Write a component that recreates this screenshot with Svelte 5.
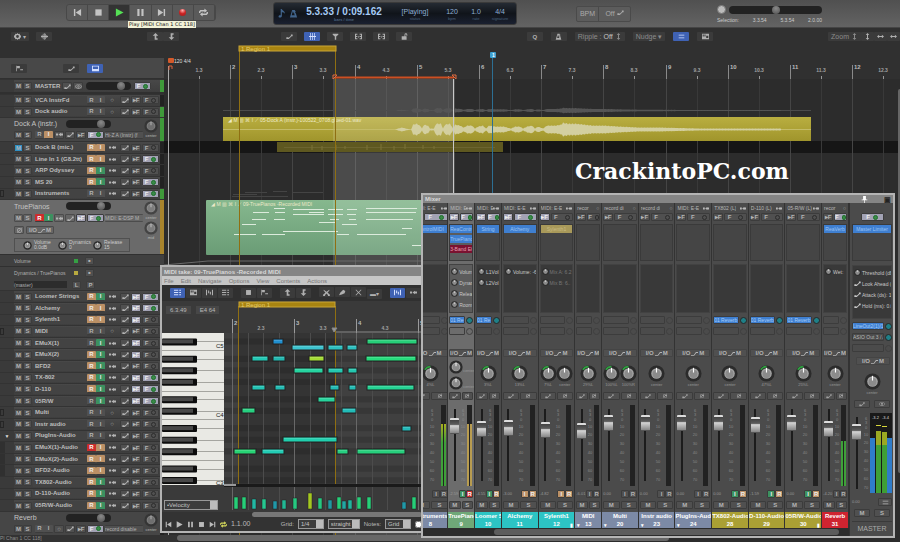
<script>
    // Track list, R/I colours: t = tan, g = green, r = red, - = off
    const topTracks = [
        { name: "VCA InstrFd", r: "-", i: "-" },
        { name: "Dock audio", r: "-", i: "-", meter: "green" }
    ];
    const inputTracks = [
        { name: "Dock B (mic.)", r: "t", i: "t", io: true, muted: true },
        { name: "Line In 1 (G8.2tt)", r: "t", i: "t", io: true, fx: true },
        { name: "ARP Odyssey", r: "t", i: "g", io: true },
        { name: "MS 20", r: "t", i: "g", io: true, fx: true },
        { name: "Instruments", r: "-", i: "-", io: true, fx: true, meter: "green", folder: true }
    ];
    const tracks = [
        { name: "Loomer Strings", r: "t", i: "g", io: true, pre: true, fx: true },
        { name: "Alchemy", r: "t", i: "t", io: true, pre: true, fx: true },
        { name: "Sylenth1", r: "t", i: "t", io: true, pre: true },
        { name: "MIDI", r: "-", i: "-", folder: true },
        { name: "EMuX(1)", r: "-", i: "g", io: true, pre: true },
        { name: "EMuX(2)", r: "t", i: "g", io: true, pre: true },
        { name: "BFD2", r: "t", i: "g", io: true },
        { name: "TX-802", r: "t", i: "g", io: true, pre: true, fx: true },
        { name: "D-110", r: "t", i: "g", io: true, pre: true, fx: true },
        { name: "05R/W", r: "-", i: "g", io: true, pre: true, fx: true },
        { name: "Multi", r: "-", i: "-", folder: true },
        { name: "Instr audio", r: "-", i: "-", folder: true },
        { name: "PlugIns-Audio", r: "-", i: "-", io: true, open: true },
        { name: "EMuX(1)-Audio", r: "r", i: "t", io: true, child: true },
        { name: "EMuX(2)-Audio", r: "t", i: "t", io: true, child: true },
        { name: "BFD2-Audio", r: "t", i: "t", io: true, child: true },
        { name: "TX802-Audio", r: "t", i: "g", io: true },
        { name: "D-110-Audio", r: "t", i: "g", io: true },
        { name: "05R/W-Audio", r: "t", i: "g", io: true }
    ];

    const strips = [
        { name: "Instruments", num: 8, color: "slate", wide: true, cut: true, rec: "MIDI: E-E", io: true, pre: true, fx: true, fxs: ["ControlMIDI"], knobs: ["4%L"], vol: "-2.9", fader: 79, meter: "green", arm: "" },
        { name: "TruePianos", num: 9, color: "green", sel: true, rec: "MIDI: E", io: true, pre: true, fx: true, fxs: ["ReaControl", "TruePianos", "3-Band EQ"], params: ["Volume", "Dynamics", "Release", "Room"], send: "01 Re", knobs: ["center", "center"], vol: "-2.59", fader: 79, meter: "gold", arm: "gr" },
        { name: "Loomer Strings", num: 10, color: "cyan", rec: "MIDI: E", io: true, pre: true, fx: true, fxs: ["String"], params: ["L1Vol", "L2Vol"], send: "01 Re", knobs: ["3%L"], vol: "-4.55", fader: 75, arm: "gt" },
        { name: "Alchemy", num: 11, color: "cyan", wide: true, rec: "MIDI: E-E", io: true, pre: true, fx: true, fxs: ["Alchemy"], params: ["Volume: -6"], knobs: ["13%L"], vol: "-3.00", fader: 77, arm: "tt" },
        { name: "Sylenth1", num: 12, color: "cyan", wide: true, rec: "MIDI: E-E", io: true, pre: true, fxs: ["Sylenth1"], bypass: true, params: ["Mix A: 6.2", "Mix B: 6.."], knobs: ["7%L", "center"], vol: "-4.82", fader: 73, arm: "tt", mark: "▮" },
        { name: "MIDI", num: 13, color: "slate", rec: "recor", fxs: [], knobs: ["29%L"], vol: "-6.01", fader: 72, arm: "", mark: "▾" },
        { name: "Multi", num: 20, color: "slate", wide: true, rec: "record di", fxs: [], knobs: ["100%L", "100%R"], vol: "0.00", fader: 85, arm: "", mark: "▾" },
        { name: "Instr audio", num: 23, color: "slate", wide: true, rec: "record di", fxs: [], knobs: ["center"], vol: "0.00", fader: 85, arm: "", mark: "▾" },
        { name: "PlugIns-Audio", num: 24, color: "slate", wide: true, rec: "MIDI: E-E", io: true, fxs: [], knobs: ["center"], vol: "0.00", fader: 85, arm: "", mark: "▾" },
        { name: "TX802-Audio", num: 28, color: "olive", wide: true, rec: "TX802 (L)", io: true, fxs: [], send: "01 Reverb", knobs: ["center"], vol: "0.00", fader: 85, arm: "gt" },
        { name: "D-110-Audio", num: 29, color: "olive", wide: true, rec: "D-110 (L)", io: true, fxs: [], send: "01 Reverb", knobs: ["47%L"], vol: "-1.59", fader: 81, arm: "gt" },
        { name: "05R/W-Audio", num: 30, color: "olive", wide: true, rec: "05-R/W (L)", io: true, fxs: [], send: "01 Reverb", knobs: ["25%L"], vol: "0.00", fader: 85, arm: "gt", mark: "▮" },
        { name: "Reverb", num: 31, color: "red", rec: "recor", fx: true, fxs: ["ReaVerb"], params: ["Wet:"], knobs: ["center"], vol: "-4.20", fader: 75, meter: "low", arm: "" }
    ];
    const masterParams = ["Threshold (dB)", "Look Ahead (s)", "Attack (ds): 10", "Hold (ms): 0.0"];
    const scale = [[6, 7], [3, 11], [0, 16], [10, 23], [20, 31], [30, 40], [40, 49], [50, 58], [60, 67], [70, 76]];

    const midiMenus = ["File", "Edit", "Navigate", "Options", "View", "Contents", "Actions"];
    const blackRows = [0, 3, 5, 7, 10, 12, 15, 17, 19, 22, 24];
    const whiteLines = [0, 1.5, 3, 5, 7, 8.5, 10, 12, 13.5, 15, 17, 19, 20.5, 22, 24];

    // x, width, row, colour
    const notes = [
        [49, 10, 0, "#1f8fd0"], [68, 32, 1, "#3cc4cf"], [104, 15, 1, "#2cc0c0"], [123, 10, 1, "#2cc0c0"], [143, 50, 0, "#26cf78"],
        [28, 16, 3, "#22c8b4"], [49, 12, 3, "#22b8b0"], [85, 15, 3, "#a4dc34"], [142, 50, 3, "#26dc7c"],
        [70, 29, 5, "#26d4a0"], [104, 15, 5, "#24c8b0"], [124, 9, 5, "#24c8b0"],
        [28, 13, 8, "#22c4b4"], [51, 10, 8, "#22bcb4"], [106, 9, 8, "#22bcb4"], [125, 7, 8, "#22bcb4"], [143, 47, 8, "#24d494"],
        [94, 17, 10, "#26d49c"], [18, 13, 12, "#26d080"], [118, 14, 12, "#22bcb8"], [178, 9, 15, "#22b8b8"],
        [59, 54, 17, "#20cfae"], [10, 22, 19, "#26d474"], [38, 22, 19, "#22ccb4"], [113, 11, 19, "#26cf80"], [133, 48, 19, "#26cf7c"]
    ];
    const velocities = [
        [10, 12, "#26cf78"], [18, 12, "#26cf78"], [28, 10, "#22b8a4"], [38, 10, "#26c890"], [49, 8, "#2098a8"], [58, 9, "#22b894"], [69, 11, "#26c880"],
        [84, 16, "#a4c820"], [94, 11, "#26c880"], [104, 9, "#2098a0"], [113, 12, "#26cf78"], [118, 8, "#22a8a4"], [124, 9, "#22b49c"], [133, 12, "#26cf78"],
        [143, 12, "#26cf78"], [178, 7, "#2098a8"], [188, 12, "#26cf78"]
    ];

    // Notes inside the green TruePianos item: x, y, width
    const itemNotes = [
        [274, 208, 11], [293, 209, 31], [253, 212, 16], [275, 212, 10], [309, 212, 15], [328, 209, 15], [347, 209, 10], [366, 208, 51], [366, 212, 50],
        [293, 214, 31], [328, 214, 15], [347, 214, 9], [252, 219, 14], [274, 219, 11], [330, 219, 9], [349, 219, 7], [366, 219, 47], [319, 222, 16],
        [242, 224, 14], [342, 224, 15], [402, 228, 10], [283, 231, 55], [234, 234, 22], [262, 234, 23], [337, 234, 12], [357, 234, 49], [412, 245, 9]
    ];

    const bars = [1, 2, 3, 4, 5, 6, 7, 8, 9, 10, 11, 12];
    const barX = (n) => 168 + Math.round(62.2 * (n - 1));

    // Outline of the recorded take, half height at each x
    const env = [
        [395, 0], [398, 1], [402, 2], [406, 1], [411, 0], [413, 5], [417, 6], [421, 3], [422, 1], [424, 5], [428, 4], [430, 1], [434, 1], [436, 6], [441, 6], [443, 1],
        [445, 5], [450, 6], [453, 1], [455, 5], [460, 4], [464, 2], [467, 4], [472, 4], [475, 1], [478, 3], [483, 4], [486, 1], [489, 4], [496, 3], [504, 3],
        [511, 1], [515, 3], [520, 3], [523, 1], [527, 3], [532, 4], [535, 1], [538, 3], [543, 1], [547, 4], [555, 4], [561, 5], [563, 7], [568, 6], [576, 6], [584, 5], [594, 4],
        [604, 4], [620, 3], [640, 2], [660, 2], [700, 1], [750, 1], [782, 1]
    ];
    function wave(mid, amp) {
        const pts = [];
        for (let k = 0; k < env.length - 1; k++) {
            const [x0, h0] = env[k];
            const [x1, h1] = env[k + 1];
            for (let x = x0; x < x1; x++) {
                const h = h0 + ((h1 - h0) * (x - x0)) / (x1 - x0);
                pts.push([x, h * amp * (x % 3 === 1 ? 0.85 : 1)]);
            }
        }
        const up = pts.map(([x, h]) => `${x} ${(mid - h).toFixed(1)}`);
        const down = pts.reverse().map(([x, h]) => `${x} ${(mid + h).toFixed(1)}`);
        return "M" + up.concat(down).join("L") + "Z";
    }

    const icons = {
        prev: "M1 1h1.6v8H1zM9 1v8L3 5z",
        stop: "M1.5 1.5h7v7h-7z",
        play: "M1 .5L9.5 5 1 9.5z",
        pause: "M1.5 1h2.4v8H1.5zM6 1h2.4v8H6z",
        next: "M7.4 1H9v8H7.4zM1 1v8l6-4z",
        loop: "M0 5.5V4l1.5-1.7H6V.5L9 3 6 5.4V3.8H2L1.4 5.5zM10 4.5V6L8.5 7.7H4v1.8L1 7l3-2.4v1.6h4l.6-1.7z",
        env: "M.5 6h3v1.2L7 4V2.2h2.5v2.4H8L4 8.6H.5z",
        io: "M0 3.5h3v3H0zM3.6 5L7 2.6v4.8zM7 3.5h3v3H7z",
        up: "M5 0l4 4H6.2v3.5H8V9.5H3.8V4H1z",
        down: "M5 10l4-4H6.2V2.5H8V.5H3.8V6H1z",
        gear: "M5 0l1 1.4L8 1l.6 1.8L10 4v2L8.6 7.2 8 9l-2-.4L5 10 4 8.6 2 9l-.6-1.8L0 6V4l1.4-1.2L2 1l2 .4zM5 3a2 2 0 100 4 2 2 0 000-4z",
        wave: "M0 4.4h1V3h1v1.4h.6V1h1v3.4h.7V.2h1v4.2H6V1h1v3.4h.8V3h1v1.4H10v1.2H8.8V7h-1V5.6H7V9H6V5.6h-.7v4.2h-1V5.6h-.7V9h-1V5.6H2V7H1V5.6H0z",
        grid: "M1.500 0h1v4.400h2V0h1v4.400h2V0h1v4.400H10v1.200H8.500V10h-1V5.600h-2V10h-1V5.600h-2V10h-1V5.600H0V4.400h1.500z",
        funnel: "M1 1h8v1.5L6 5v4.5H4V5L1 2.500z",
        split: "M0 1h3.4v1.4H1.5v1.9h1.9v1.4H1.500v1.9h1.9V9H0zM10 1H6.600v1.4h1.9v1.9H6.600v1.400h1.9v1.9H6.600V9H10zM4.300 6.500l1.500-3.300v3.300z",
        lock: "M1 4.500h4V2.500a2 2 0 014 0v1.500H7.800V2.700a.8.800 0 00-1.600 0v1.800H8V9.500H1z",
        metro: "M3.500 1h3L9 9.500H1zM4.300 2.500L3 7h3.300zM7 3l1-1-2.500 6z",
        flag: "M0 1h1v8H0zM1.500 1.500h4v3h-4zM6 6h4v1.500H6z",
        view: "M0 1h10v8H0zM1.300 2.300v3.500h7.400V2.300z",
        list: "M0 1h6v1.600H0zM0 4.200h6v1.600H0zM0 7.400h6V9H0zM7.500 1H10v1.600H7.500zM7.500 4.200H10v1.600H7.500zM7.500 7.400H10V9H7.500z",
        lines: "M1 2.500h8v1.200H1zM1 6.300h8v1.200H1z",
        keys: "M0 1h10v8H0zM1 2v3h1.500V2zM3.500 2v3H5V2zM6 4v3h3V4z",
        cut: "M1 1l4 3 4-3v1.500L6.500 5 9 7.500a1.500 1.500 0 11-2 1L5 6.400 3 8.500a1.500 1.500 0 11-2-1L3.500 5 1 2.500z",
        pen: "M0 9l2-4 4-4 3 2-1 3-4 2z",
        cross: "M1.500.8L5 4.200 8.500.8l.7.7L5.800 5l3.400 3.500-.7.7L5 5.800 1.500 9.200l-.7-.7L4.200 5 .8 1.500z",
        quant: "M0 1h1.500v8H0zM8.500 1H10v8H8.500zM3 2h1.500v4H3zM5.500 4H7v4H5.500z",
        mono: "M3.500 2a3 3 0 100 6 3 3 0 000-6zm0 1a2 2 0 110 4 2 2 0 010-4zM6.500 2a3 3 0 100 6 3 3 0 000-6zm0 1a2 2 0 110 4 2 2 0 010-4z",
        phase: "M5 1.500a3.500 3.500 0 100 7 3.500 3.500 0 000-7zm0 1a2.500 2.500 0 110 5 2.500 2.500 0 010-5zM8 1l.7.7-6.700 7-.7-.7z",
        route: "M0 7h4L7 3h3v1.200H7.500L4.500 8.200H0z",
        zoomv: "M5 0l2.500 3H5.700v4h1.800L5 10 2.500 7h1.800V3H2.500z",
        zoomh: "M0 5l3-2.500v1.800h4V2.500L10 5 7 7.500V5.700H3v1.800z",
        note: "M3 0h1.200c.4 2 4 2 3.300 5.500C7 4 5.500 3.600 4.300 3.600V8C4 10 .5 10 .6 8.200.7 6.800 2.200 6.600 3 7z"
    };

    let playing = $state(true);
    let position = $state(50);
</script>

{#snippet icon(name)}
    <svg class="ico" viewBox="0 0 10 10" aria-hidden="true"><path d={icons[name]} fill="currentColor" fill-rule="evenodd" /></svg>
{/snippet}

{#snippet knob(color)}
    <svg class="knob" viewBox="0 0 18 18" aria-hidden="true">
        <circle cx="9" cy="9" r="8.500" fill="#2b2b2b" />
        {#if color}<path d="M9 1.800A7.200 7.200 0 0 0 3 5" stroke={color} stroke-width="1.800" fill="none" />{/if}
        <circle cx="9" cy="9" r="5.600" fill="#a4a4a4" />
        <circle cx="9" cy="9.500" r="4.200" fill="#8b8b8b" />
        <path d="M9 3v5" stroke="#fff" stroke-width="1.200" />
    </svg>
{/snippet}

{#snippet fx(on)}
    <button class="b fx" class:lit={on} aria-label="FX">F <i class:on></i></button>
{/snippet}

{#snippet ms(muted)}
    <button class="b m" class:blue={muted}>M</button><button class="b m">S</button>
{/snippet}

{#snippet row(t)}
    <li class="track">
        <span class="gutter" class:child={t.child}>{#if t.open}▼{:else if t.folder}<em></em>{/if}</span>
        {@render ms(t.muted)}
        <span class="name">{t.name}</span>
        <button class="b ri c{t.r}">R</button><button class="b ri c{t.i}">I</button>
        <button class="b io" aria-label="Routing">{#if t.io}{@render icon("io")}{:else}○{/if}</button>
        <button class="b sm" aria-label="Envelopes">{@render icon("env")}</button>
        <button class="b sm" class:lit={t.pre}>▸F</button>
        {@render fx(t.fx)}
        <span class="peak {t.meter ?? ''}"></span>
    </li>
{/snippet}

{#snippet tallRow(name, rec, cls)}
    <div class="tall {cls}">
        <div class="left">
            <div class="line"><span class="tname">{name}</span><input class="hs" type="range" value="85" aria-label="{name} volume" /></div>
            <div class="line">
                {@render ms(false)}
                <button class="b ri first" class:cr={cls === 'picked'}>R</button><button class="b ri" class:ct={cls === 'dock'} class:cg={cls === 'picked'}>I</button>
                <button class="b sm" aria-label="Routing">{#if cls === 'rev'}○{:else}{@render icon("io")}{/if}</button>
                <button class="b sm" aria-label="Envelopes">{@render icon("env")}</button>
                <button class="b sm" class:lit={cls === 'picked'}>▸F</button>
                {@render fx(true)}
                <button class="b rec">{rec}</button>
            </div>
            {#if cls === 'picked'}
                <div class="line">
                    <button class="b sm" aria-label="Phase">{@render icon("phase")}</button>
                    <button class="b iobtn">I/O {@render icon("route")} M</button>
                </div>
                <div class="tcp">
                    {#each [["Volume", "0.0dB"], ["Dynamics", "0"], ["Release", "15"]] as [p, v]}
                        {@render knob()}<span>{p}<br />{v}</span>
                    {/each}
                </div>
            {/if}
        </div>
        <div class="pans">
            {@render knob()}<small>center</small>
            {#if cls === 'picked'}{@render knob()}<small>mid</small>{/if}
        </div>
        <span class="peak {cls === 'picked' ? 'gold' : cls === 'dock' ? 'green' : ''}"></span>
    </div>
{/snippet}

<main>
    <header class="transport">
        <div class="play-group">
            <button aria-label="Go to start">{@render icon("prev")}</button>
            <button aria-label="Stop" onclick={() => (playing = false)}>{@render icon("stop")}</button>
            <button class:active={playing} aria-label="Play" onclick={() => (playing = true)}>{@render icon("play")}</button>
            <button aria-label="Pause">{@render icon("pause")}</button>
            <button aria-label="Go to end">{@render icon("next")}</button>
            <button aria-label="Record"><span class="rec-dot"></span></button>
            <button aria-label="Repeat">{@render icon("loop")}</button>
            <div class="tip">Play [MIDI Chan 1 CC 118]</div>
        </div>
        <div class="display">
            <span class="deco">{@render icon("note")}{@render icon("metro")}</span>
            <div class="time">5.3.33 / 0:09.162<small>bars / time</small></div>
            <div class="stat">[{playing ? "Playing" : "Stopped"}]<small>status</small></div>
            <div class="num">120<small>bpm</small></div>
            <div class="num">1.0<small>rate</small></div>
            <div class="num">4/4<small>signature</small></div>
        </div>
        <div class="bpm"><button>BPM</button><button>Off {@render icon("env")}</button></div>
        <div class="selection">
            <div class="rate"><span class="dial"></span><input class="hs" type="range" bind:value={position} aria-label="Play rate" /></div>
            <div class="times"><span>Selection:</span><span>3.3.54</span><span>5.3.54</span><span>2.0.00</span></div>
        </div>
    </header>

    <nav class="toolbar">
        <div class="g settings"><button class="tb">{@render icon("gear")} ▾</button><button class="tb" aria-label="Waveform">{@render icon("wave")}</button></div>
        <div class="g arrows"><button class="tb" aria-label="Up">{@render icon("up")}</button><button class="tb" aria-label="Down">{@render icon("down")}</button></div>
        <div class="g edit">
            <button class="tb" aria-label="Envelope">{@render icon("env")}</button>
            <button class="tb blue" aria-label="Grid">{@render icon("grid")}</button>
            <button class="tb" aria-label="Filter">{@render icon("funnel")}</button>
            <button class="tb" aria-label="Crossfade">{@render icon("split")}</button>
            <button class="tb" aria-label="Group">{@render icon("split")}</button>
            <button class="tb" aria-label="Lock">{@render icon("lock")}</button>
        </div>
        <div class="g modes">
            <button class="tb q">Q</button>
            <button class="tb" aria-label="Metronome">{@render icon("metro")}</button>
            <button class="tb text">Ripple : <b>Off</b> {@render icon("zoomv")}</button>
            <button class="tb text">Nudge ▾</button>
            <button class="tb blue" aria-label="Lines">{@render icon("lines")}</button>
            <button class="tb" aria-label="Keyboard">{@render icon("keys")}</button>
        </div>
        <div class="g zoom"><button class="tb text">Zoom {@render icon("zoomv")}</button><button class="tb" aria-label="Zoom tracks">{@render icon("zoomv")}</button><button class="tb" aria-label="Zoom out">{@render icon("zoomh")}</button><button class="tb" aria-label="Zoom in">{@render icon("zoomh")}</button></div>
    </nav>

    <div class="work">
        <aside>
            <div class="tools"><button class="tb" aria-label="Markers">{@render icon("flag")}</button><button class="tb second" aria-label="Automation">{@render icon("env")}</button><button class="tb blue" aria-label="Mixer view">{@render icon("view")}</button></div>
            <div class="track master">
                <span class="gutter"></span>
                {@render ms(false)}
                <span class="name">MASTER</span>
                <button class="b sm" aria-label="Envelopes">{@render icon("env")}</button>
                <button class="b sm" aria-label="Mono">{@render icon("mono")}</button>
                <input class="hs" type="range" value="85" aria-label="Master volume" />
                {@render fx(true)}
                <span class="peak green"></span>
            </div>
            <ul class="n2">{#each topTracks as t}{@render row(t)}{/each}</ul>
            {@render tallRow("Dock A (instr.)", "Hi-Z A (Instr) (f", "dock")}
            <ul class="n5">{#each inputTracks as t}{@render row(t)}{/each}</ul>
            {@render tallRow("TruePianos", "MIDI: E-DSP M", "picked")}
            <div class="lane"><span>Volume</span><i class="on"></i><button class="b">■</button></div>
            <div class="lane two">
                <div><span>Dynamics / TruePianos</span><i></i><button class="b">■</button></div>
                <div><span class="bar">(master)</span><button class="b">L</button><button class="b">P</button></div>
            </div>
            <ul class="n19">{#each tracks as t}{@render row(t)}{/each}</ul>
            {@render tallRow("Reverb", "record disable", "rev")}
        </aside>

        <svg class="arrange" role="img" aria-label="Arrange view">
            <defs>
                <linearGradient id="gold" x2="0" y2="1"><stop offset="0" stop-color="#b9ae40" /><stop offset="1" stop-color="#a0952c" /></linearGradient>
                <linearGradient id="leaf" x2="0" y2="1"><stop offset="0" stop-color="#86b88e" /><stop offset="1" stop-color="#6a9c76" /></linearGradient>
            </defs>
            <g transform="translate(-164 -45)">
                <rect x="164" y="45" width="100%" height="34" fill="#303030" />
                <rect x="164" y="79" width="100%" height="470" fill="#2c2c2c" />
                <rect x="164" y="141" width="100%" height="12" fill="#161616" />
                {#each bars as n}
                    <path d="M{barX(n)}.5 79V540" stroke="#454545" />
                    <path d="M{barX(n) + 31}.5 79V540" stroke="#393939" />
                    <path d="M{barX(n) + 31}.5 76v3" stroke="#999" />
                    {#if n > 1}
                        <path d="M{barX(n)}.5 65v14" stroke="#8a8a8a" />
                        <text x={barX(n) + 2} y="69" class="bar">{n}</text>
                    {/if}
                    <text x={barX(n) + 31} y="72" class="half">{n}.3</text>
                {/each}
                <rect x="333" y="79" width="122" height="461" fill="#fff" fill-opacity=".15" />
                <path d="M223 110.500H811" stroke="#4c4c4c" />
                <path d={wave(110.5, 0.4)} fill="#555" />
                <rect x="223" y="117" width="588" height="24" fill="url(#gold)" />
                <rect x="333" y="117" width="122" height="24" fill="#fff" fill-opacity=".14" />
                <path d="M223 129.500H811" stroke="#c4bc68" />
                <path d={wave(129.5, 1)} fill="#d3cfa0" />
                <text x="228" y="122" class="item">◢ M ▥ ⌘ I ⟋ 05-Dock A (instr.)-100522_0708.glued-01.wav</text>
                <rect x="277" y="142" width="226" height="10" fill="#5e5820" />
                <path d="M284 147.500H495" stroke="#6c6530" />
                <path d="M312 145v5M322 146v4M336 145v5M345 146v3M367 145v5M381 144v6M394 146v4M405 144v5M423 145v4M434 146v3" stroke="#7c7436" />
                <path d="M233 194.500h24M245 192.500h22M273 191.500h14M293 192.500h30M232 196.500h56" stroke="#444" />
                <rect x="206" y="200" width="300" height="55" rx="1" fill="url(#leaf)" />
                <rect x="333" y="200" width="122" height="55" fill="#fff" fill-opacity=".12" />
                <text x="211" y="206" class="item">◢ M ▥ ⌘ I ⟋ 09-TruePianos -Recorded MIDI</text>
                {#each itemNotes as [x, y, w]}
                    <rect {x} {y} width={w} height="1" fill="#dcebdc" />
                {/each}
                <path d="M164 265l44-4h250" stroke="#6a6a6a" fill="none" />
                <path d="M239.500 48V540M335.500 48V540" stroke="#8f6f12" />
                <rect x="239" y="46" width="97" height="5" fill="#a88411" stroke="#c9a536" />
                <text x="241" y="51" class="region">1  Region 1</text>
                <path d="M334 77.500H454" stroke="#cc4f22" stroke-width="2" />
                <path d="M333 75h4l-4 4zM456 75h-4l4 4z" fill="#333" stroke="#e06c40" />
                <path d="M453.500 79V540" stroke="#c8c8c8" />
                <path d="M492.500 57V540" stroke="#2d6f93" />
                <rect x="490" y="52" width="6" height="6" rx="1" fill="#3d9fd0" />
                <text x="492" y="57" class="half white">1</text>
                <path d="M168.500 66V540" stroke="#aaa" />
                <rect x="168" y="58" width="6" height="5" rx="1" fill="#d45a2a" />
                <text x="174" y="63" class="tempo">120 4/4</text>
                <path d="M169 70v-4h3v3" stroke="#e0603a" fill="none" />
                <text x="575" y="179" class="logo">CrackintoPC.com</text>
                <rect x="898" y="89" width="4" height="384" rx="2" fill="#666" />
            </g>
        </svg>
    </div>

    <footer><span>PI Chan 1 CC 118]</span><div class="scroll"><span></span></div></footer>

    <section class="window midi">
        <h2>MIDI take: 09-TruePianos -Recorded MIDI</h2>
        <div class="menu">{#each midiMenus as m}<button>{m}</button>{/each}</div>
        <div class="mtools">
            <div><button class="tb blue" aria-label="Piano roll">{@render icon("list")}</button><button class="tb" aria-label="Named notes">{@render icon("keys")}</button><button class="tb" aria-label="Event list">{@render icon("quant")}</button><button class="tb" aria-label="Lines">{@render icon("list")}</button></div>
            <div><button class="tb" aria-label="Stop">{@render icon("stop")}</button><button class="tb" aria-label="Step">{@render icon("flag")}</button></div>
            <div><button class="tb" aria-label="Up">{@render icon("up")}</button><button class="tb" aria-label="Down">{@render icon("down")}</button></div>
            <div><button class="tb" aria-label="Cut">{@render icon("cut")}</button><button class="tb" aria-label="Draw">{@render icon("pen")}</button><button class="tb" aria-label="Delete">{@render icon("cross")}</button><button class="tb">▬▾</button></div>
            <div><button class="tb blue" aria-label="Quantize">{@render icon("quant")}</button><button class="tb" aria-label="Import">{@render icon("io")}</button></div>
        </div>
        <div class="roll">
            <div class="keys">
                <div class="pos"><span>6.3.49</span><span>E4 64</span></div>
                <svg class="piano" role="img" aria-label="Piano keys">
                    <rect width="62" height="152" fill="#e9e9e4" />
                    {#each whiteLines as r}
                        <path d="M0 {Math.round(8.4 + 5.78 * r) + 0.5}H62" stroke="#a5a5a0" />
                    {/each}
                    {#each blackRows as r}
                        <rect x="0" y={5.4 + 5.78 * r} width="35" height="7" rx="1" fill="#0c0c0c" />
                        <rect x="0" y={6.4 + 5.78 * r} width="31" height="4" fill="#484848" />
                    {/each}
                    <text x="54" y="15">C5</text>
                    <text x="54" y="84">C4</text>
                    <text x="54" y="152">C3</text>
                </svg>
                <select aria-label="Controller lane"><option>•Velocity</option></select>
            </div>
            <svg class="notes" role="img" aria-label="Notes">
                <rect y="32" width="100%" height="152" fill="#404040" />
                {#each blackRows as r}<rect y={37.5 + 5.78 * r} width="100%" height="6" fill="#373737" />{/each}
                <rect x="14" y="32" width="97" height="152" fill="#000" fill-opacity=".18" />
                {#each [0, 1, 2, 3, 4, 5, 6, 7, 8, 9, 10, 11, 12, 13] as n}
                    <path d="M{8 + Math.round(n * 15.5)}.5 32V209" stroke={n % 4 ? "#4c4c4c" : "#686868"} />
                {/each}
                {#each [2, 3, 4, 5] as n}
                    <path d="M{8 + (n - 2) * 62}.5 18v14" stroke="#9a9a9a" />
                    <text x={10 + (n - 2) * 62} y="24" class="bar">{n}</text>
                    <text x={37 + (n - 2) * 62} y="29" class="half">{n}.3</text>
                {/each}
                <path d="M14.500 5V184M111.500 5V184" stroke="#8f6f12" />
                <rect x="15" y="1" width="96" height="5" fill="#a88411" stroke="#c9a536" />
                <text x="17" y="6" class="region">1  Region 1</text>
                <path d="M108 27h5l-3 4zM112 31h90" stroke="#888" fill="#999" />
                {#each notes as [x, w, r, c]}
                    <rect {x} y={38 + Math.round(5.78 * r)} width={w} height="5" fill={c} stroke="#222" />
                    <path d="M{x + 1} {39.5 + Math.round(5.78 * r)}h{w - 2}" stroke="#fff" stroke-opacity=".15" />
                {/each}
                <rect y="183" width="100%" height="3" fill="#1a1a1a" />
                <rect y="183" width="12" height="2" fill="#999" />
                {#each velocities as [x, h, c]}
                    <rect {x} y={208 - h} width="4" height={h} fill={c} stroke="#222" stroke-width=".5" />
                {/each}
            </svg>
        </div>
        <div class="mscroll"><span></span></div>
        <div class="mfoot">
            {#each ["prev", "play", "pause", "stop", "next"] as n}<button aria-label={n}>{@render icon(n)}</button>{/each}
            <button class="loop" aria-label="Repeat">{@render icon("loop")}</button>
            <span>1.1.00</span>
            <label for="grid">Grid:</label><select id="grid"><option>1/4</option></select>
            <select class="w" aria-label="Grid type"><option>straight</option></select>
            <label for="len">Notes:</label><select id="len"><option>Grid</option></select>
            <input type="checkbox" aria-label="Key snap" />
        </div>
    </section>

    <section class="window mixer">
        <h2>Mixer <span><svg viewBox="0 0 10 10" class="ico"><path d="M3 0h4v5h2v1H5.500v4h-1V6H1V5h2z" fill="#fff" /></svg><button aria-label="Close">▣</button></span></h2>
        <div class="desk">
            <div class="bank">
                <div class="strips">
                    {#each strips as s}
                        <article class="strip" class:wide={s.wide} class:cut={s.cut} class:sel={s.sel}>
                            <div class="srec"><span>{s.rec}</span>{#if s.io}{@render icon("io")}{:else}○{/if}</div>
                            <div class="sfx"><button class="b" class:lit={s.pre}>▸F</button>{@render fx(s.fx)}</div>
                            <div class="chain">
                                {#each s.fxs as f, i}<button class:band={i === 2} class:bypass={s.bypass}>{f}</button>{/each}
                            </div>
                            <div class="params">
                                {#each s.params ?? [] as p}<div class:dim={s.bypass}>{@render knob()}<span>{p}</span></div>{/each}
                            </div>
                            <div class="send"><span class:used={s.send}>{s.send ?? ""}</span><i class:used={s.send}></i></div>
                            <div class="send"><span></span><i></i></div>
                            <button class="b sio">I/O {@render icon("route")} M</button>
                            <div class="pan" class:stack={s.sel}>
                                {#each s.knobs as k}<div>{@render knob(k === "center" ? "" : "#2f9f3f")}<small>{k}</small></div>{/each}
                            </div>
                            <div class="pair"><button class="b" aria-label="Envelopes">{@render icon("env")}</button><button class="b" aria-label="Phase">{@render icon("phase")}</button></div>
                            <div class="fader">
                                <input class="vs" type="range" value={s.fader} aria-label="{s.name} volume" />
                                <svg class="scale" aria-hidden="true">{#each scale as [v, y]}<text x="4" {y}>{v}</text>{/each}</svg>
                                <span class="vu {s.meter ?? ''}"><i></i><i></i></span>
                            </div>
                            <div class="vals"><span>{s.vol}</span><button class="b c{s.arm[0] ?? '-'}">I</button><button class="b c{s.arm[1] ?? '-'}">R</button></div>
                            <div class="pair ms"><button class="b">M</button><button class="b">S</button></div>
                            <footer class="label {s.color}">{s.name}<br />{s.num}{#if s.mark}<sub class:right={s.mark === '▮'}>{s.mark}</sub>{/if}</footer>
                        </article>
                    {/each}
                </div>
                <div class="bscroll"><span></span></div>
            </div>
            <article class="mstrip">
                <div class="mfx">{@render fx(true)}</div>
                <div class="chain"><button>Master Limiter</button></div>
                <div class="params">{#each masterParams as p, i}<div>{#if i === 0}{@render knob()}{:else}{@render icon("env")}{/if}<span>{p}</span></div>{/each}</div>
                <div class="send"><span class="used">LineOut2(1)/1</span><i class="used"></i></div>
                <div class="send"><span>ASIO Out 3 / AS</span><i class="used"></i></div>
                <div class="send"><span></span><i></i></div>
                <button class="b sio">I/O {@render icon("route")} M</button>
                <div class="pan"><div>{@render knob()}<small>center</small></div></div>
                <div class="pair"><button class="b" aria-label="Envelopes">{@render icon("env")}</button><button class="b" aria-label="Mono">{@render icon("mono")}</button></div>
                <div class="fader">
                    <input class="vs" type="range" value="83" aria-label="Master volume" />
                    <svg class="scale" aria-hidden="true">{#each scale as [v, y]}<text x="4" {y}>{v}</text>{/each}</svg>
                    <svg class="big" viewBox="0 0 22 80" role="img" aria-label="Master meter">
                        <rect width="22" height="80" fill="#191919" />
                        <text x="2" y="6">-3.2</text><text x="12" y="6">-3.4</text>
                        <path d="M0 25h5v55H0zM17 25h5v55h-5z" fill="#2f7cc8" />
                        <path d="M6 18h5v62H6zM12 19h5v61h-5z" fill="#3f9f35" />
                        <path d="M6 18h5v14H6zM12 19h5v13h-5z" fill="#9aa822" />
                        <path d="M6 12.500h5M12 13.500h5" stroke="#d8d83a" />
                    </svg>
                </div>
                <div class="vals"><span>0.00</span><button class="b" aria-label="Output">{@render icon("lines")}</button></div>
                <div class="pair ms"><button class="b">M</button><button class="b">S</button></div>
                <footer>MASTER</footer>
            </article>
        </div>
    </section>
</main>

<style>
    :global(body) { margin: 0; background: #2c2c2c; }
    main { position: relative; display: flex; flex-direction: column; height: 100vh; overflow: hidden; font: 6px/8px "Liberation Sans", Arial, sans-serif; color: #b8b8b8; }
    main :global(*) { box-sizing: border-box; }
    button { padding: 0; border: 0; background: none; font: inherit; color: inherit; cursor: pointer; white-space: nowrap; }
    ul, h2 { margin: 0; padding: 0; list-style: none; }
    small { font-size: 5px; line-height: 6px; }
    .ico { width: 7px; height: 7px; flex: none; }
    .knob { width: 14px; height: 14px; flex: none; }

    /* Transport */
    .transport { display: flex; align-items: center; flex: none; height: 28px; padding: 0 78px 0 66px; background: linear-gradient(#505050, #636363); border-bottom: 1px solid #454545; }
    .play-group { position: relative; display: flex; width: 150px; height: 17px; flex: none; margin-bottom: 2px; border: 1px solid #484848; border-radius: 3px; background: #5a5a5a; }
    .play-group button { flex: 1; display: grid; place-items: center; border-right: 1px solid #484848; color: #c4c4c4; }
    .play-group button.active { background: #333; color: #55e055; }
    .play-group .ico { width: 9px; height: 9px; }
    .rec-dot { width: 7px; height: 7px; border-radius: 50%; background: radial-gradient(circle at 50% 20%, #ffb0b0, #c22 50%, #922); }
    .tip { position: absolute; left: 61px; top: 16px; z-index: 2; padding: 0 1px; background: #f2f2d8; color: #111; white-space: nowrap; font: 5px/7px "DejaVu Sans", sans-serif; }
    .display { display: flex; align-items: center; width: 244px; height: 23px; flex: none; margin-left: 57px; padding: 0 4px; border: 1px solid #3a3a3a; border-radius: 3px; background: linear-gradient(#252b33, #10141a 50%, #1a2030); color: #8fb0d4; text-align: center; }
    .display small { display: block; color: #48607c; font-size: 4px; line-height: 4px; }
    .display .deco { display: flex; gap: 2px; width: 20px; color: #41648c; }
    .display .ico { width: 9px; height: 9px; }
    .time { flex: 1; font-size: 10px; font-weight: bold; line-height: 12px; color: #a6cbf5; }
    .stat { width: 50px; font-size: 7px; line-height: 10px; }
    .num { width: 24px; font-size: 7px; line-height: 10px; }
    .bpm { display: flex; width: 55px; height: 16px; flex: none; margin-left: 59px; border: 1px solid #4a4a4a; border-radius: 2px; background: #5c5c5c; font-size: 7px; color: #aaa; }
    .bpm button { width: 21px; }
    .bpm button + button { flex: 1; border-left: 1px solid #4a4a4a; }
    .selection { width: 105px; flex: none; margin-left: auto; color: #ccc; font-size: 5px; }
    .rate { display: flex; align-items: center; gap: 3px; height: 12px; }
    .dial { width: 9px; height: 9px; border-radius: 50%; background: #bbb; border: 1px solid #777; }
    .times { display: flex; justify-content: space-between; }

    .hs { appearance: none; width: 45px; height: 8px; margin: 0; border-radius: 4px; background: #222; }
    .hs::-webkit-slider-thumb { appearance: none; width: 8px; height: 8px; border-radius: 50%; background: radial-gradient(circle at 50% 30%, #8a8a8a, #505050); }
    .rate .hs { flex: 1; }

    /* Toolbars */
    .toolbar { display: flex; align-items: center; height: 17px; flex: none; background: #303030; color: #a0a0a0; }
    .g { display: flex; align-items: center; gap: 7px; flex: none; }
    .tb { display: inline-flex; align-items: center; justify-content: center; gap: 2px; min-width: 16px; height: 9px; padding: 0 3px; border-radius: 1px; background: #3b3b3b; color: #b0b0b0; }
    .tb.blue { background: #3f62b4; color: #d4e0ff; }
    .tb.text { font-size: 7px; color: #8c8c8c; }
    .tb.q { font-weight: bold; }
    .text b { font-weight: normal; color: #c4c4c4; }
    .settings { width: 136px; padding-left: 11px; }
    .arrows { width: 145px; gap: 0; padding-left: 11px; }
    .modes { margin-left: auto; gap: 8px; }
    .zoom { margin-left: auto; gap: 0; }
    .zoom .tb { min-width: 13px; }

    /* Track panel */
    .work { display: flex; flex: 1; min-height: 0; }
    aside { display: flex; flex-direction: column; width: 164px; flex: none; padding-top: 13px; background: #303030; }
    .tools { display: flex; align-items: center; gap: 8px; height: 20px; flex: none; padding-left: 11px; background: #484848; }
    .tools .second { margin-left: 28px; }
    ul { display: flex; flex-direction: column; min-height: 0; }
    .n2 { flex: 2; margin-top: 2px; }
    .n5 { flex: 5; }
    .n19 { flex: 19; }
    .track { display: flex; align-items: center; flex: 1; min-height: 0; background: linear-gradient(#484848, #3e3e3e); border-top: 1px solid #333; }
    .master { flex: none; height: 13px; margin-top: 1px; }
    .master .hs { margin: 0 3px 0 2px; }
    .master .name { flex: none; width: 29px; }
    .master .peak { margin-left: auto; }
    .gutter { display: flex; align-items: center; justify-content: center; width: 14px; flex: none; align-self: stretch; background: #3a3a3a; color: #ddd; font-size: 5px; }
    .gutter.child { border-left: 5px solid #303030; }
    .gutter em { width: 4px; height: 7px; margin-right: auto; border: 1px solid #262626; }
    .name { flex: 1; padding-left: 2px; margin-left: 1px; background: #434343; font: bold 6px/9px "Liberation Sans", Arial, sans-serif; color: #bdbdbd; white-space: nowrap; overflow: hidden; }
    .b { display: inline-flex; align-items: center; justify-content: center; gap: 1px; height: 8px; flex: none; background: #505050; border: 1px solid #3c3c3c; border-radius: 1px; font-weight: bold; font-size: 6px; line-height: 6px; color: #b4b4b4; }
    .b.m { width: 9px; }
    .b.blue { background: #2f8fc4; }
    .b.ri { width: 9px; border-width: 0 0 1px; }
    .b.io { width: 14px; margin-right: 1px; background: none; border: 0; }
    .b.sm { width: 10px; margin-right: 1px; }
    .b.fx { width: 17px; }
    .b.lit { background: #a2a2b4; color: #eee; }
    .b.ct { background: #bb9065; color: #eee; }
    .b.cg { background: #3c9160; color: #eee; }
    .b.cr { background: #cc2c2c; color: #fff; }
    .fx i { width: 5px; height: 5px; margin-left: 2px; border: 1px solid #2c2c2c; border-radius: 50%; }
    .fx i.on { border-color: #1c6f2a; background: #3a8a48; }
    .peak { width: 4px; align-self: stretch; flex: none; margin-left: 1px; background: #222; }
    .peak.green { background: #3f9a3a; }
    .peak.gold { background: #a8842c; }

    .tall { display: flex; flex: none; height: 24px; background: #464646; border-top: 1px solid #333; }
    .tall .left { flex: 1; min-width: 0; padding-left: 14px; }
    .line { display: flex; align-items: center; height: 11px; }
    .tname { width: 52px; font: 7px/9px "Liberation Sans", Arial, sans-serif; color: #c4c4c4; white-space: nowrap; }
    .first { margin-left: 3px; }
    .line .ri + .sm { margin-left: 1px; }
    .rec { flex: 1; min-width: 0; margin-left: 1px; overflow: hidden; justify-content: flex-start; border-width: 1px 0; font-weight: normal; font-size: 5px; }
    .pans { display: flex; flex-direction: column; align-items: center; width: 16px; padding-top: 1px; }
    .pans .knob { opacity: .6; }
    .pans small { font-size: 4px; }
    .picked { height: 55px; background: #6a6a6a; }
    .picked .line { height: 12px; }
    .picked .b:not(.lit, .cr, .cg) { background: #666; border-color: #4c4c4c; }
    .iobtn { padding: 0 2px; margin-left: 1px; }
    .tcp { display: flex; align-items: center; gap: 2px; width: 116px; height: 14px; padding-left: 8px; margin-top: 2px; border: 1px solid #505050; font-size: 5px; line-height: 5px; color: #ccc; }
    .tcp .knob { width: 9px; height: 9px; }
    .tcp span { width: 22px; }
    .lane { display: flex; align-items: center; gap: 5px; height: 12px; flex: none; padding-left: 14px; background: #404040; border-top: 1px solid #303030; }
    .lane span { width: 53px; color: #b0b0b0; font-size: 5px; white-space: nowrap; }
    .lane i { width: 4px; height: 4px; margin: 0 2px; background: #b8aa40; }
    .lane i.on { background: #35a044; }
    .lane .b { width: 9px; font-size: 4px; }
    .two { flex-direction: column; align-items: stretch; gap: 0; height: 24px; }
    .two div { display: flex; align-items: center; gap: 5px; height: 12px; }
    .two .bar { height: 7px; background: #2c2c2c; }
    .two .bar + .b, .two .bar + .b + .b { font-size: 6px; }

    .arrange { flex: 1; height: 100%; min-width: 0; }
    svg text { fill: #b8b8b8; font-family: "Liberation Sans", Arial, sans-serif; }
    svg .bar { font-size: 6px; font-weight: bold; }
    svg .half { font-size: 5px; font-weight: bold; text-anchor: middle; fill: #a0a0a0; }
    svg .white { fill: #fff; text-anchor: start; }
    svg .item { font-size: 5px; fill: #ece9c8; }
    svg .region { font-size: 6px; fill: #e4cc70; }
    svg .tempo { font-size: 5px; fill: #ddd; }
    svg .logo { font: bold 22px "DejaVu Serif", serif; fill: #fff; }

    main > footer { display: flex; height: 7px; flex: none; background: #333; font-size: 5px; line-height: 7px; color: #909090; }
    main > footer > span { width: 177px; }
    .scroll { flex: 1; background: #2c2c2c; }
    .scroll span { display: block; width: 68%; height: 6px; border-radius: 3px; background: #676767; }

    /* Floating windows */
    .window { position: absolute; border: 2px solid #b4b4b4; background: #3a3a3a; }
    .window h2 { display: flex; align-items: center; justify-content: space-between; height: 8px; padding: 0 2px; background: #858585; font: bold 6px/8px "Liberation Sans", Arial, sans-serif; color: #d8d8d8; }
    .window h2 span { display: flex; gap: 16px; }
    .window h2 button { font-size: 7px; line-height: 7px; color: #222; }

    .midi { left: 160px; top: 265px; width: 264px; }
    .midi h2 { height: 9px; }
    .menu { display: flex; gap: 7px; height: 9px; padding-left: 2px; background: #c6c6c6; color: #777; }
    .mtools { display: flex; justify-content: space-between; align-items: center; height: 16px; padding: 0 0 0 8px; background: #303030; }
    .mtools .tb { min-width: 15px; height: 10px; padding: 0 2px; margin-right: 1px; }
    .roll { display: grid; grid-template-columns: 62px 1fr; height: 211px; }
    .keys { display: flex; flex-direction: column; }
    .pos { display: flex; gap: 5px; height: 32px; padding: 5px 4px; }
    .pos span { height: 8px; padding: 0 4px; background: #474747; }
    .piano { width: 62px; height: 152px; }
    .piano text { font-size: 6px; fill: #222; }
    select { appearance: none; height: 10px; padding: 0 2px; border: 1px solid #999; border-radius: 0; background: linear-gradient(#bbb, #bbb) right / 7px 100% no-repeat #3c3c3c; font: 6px/8px "Liberation Sans", Arial, sans-serif; color: #c4c4c4; }
    .keys select { width: 54px; margin: 15px 0 0 2px; }
    .notes { width: 100%; height: 100%; }
    .mscroll { height: 5px; padding-left: 90px; background: #333; }
    .mscroll span { display: block; height: 5px; border-radius: 3px; background: #777; }
    .mfoot { display: flex; align-items: center; gap: 4px; height: 14px; padding-left: 3px; background: #333; color: #bbb; }
    .mfoot button { display: grid; }
    .mfoot .loop { color: #d8dc5c; }
    .mfoot span { width: 46px; font-size: 7px; }
    .mfoot select { width: 26px; }
    .mfoot .w { width: 32px; }
    .mfoot input { width: 7px; height: 7px; margin: 0; }

    .mixer { left: 421px; top: 193px; right: 5px; background: #4b4b4b; }
    .desk { display: flex; }
    .bank { flex: 1; min-width: 0; }
    .strips { display: flex; }
    .strip { display: flex; flex-direction: column; flex: 27 1 0; min-width: 0; padding: 0 1px; overflow: hidden; border-right: 1px solid #333; }
    .wide { flex-grow: 38; }
    .cut { flex-grow: 25; }
    .cut > * { width: 35px; margin-left: -11px; }
    .strip.sel { background: #6c6c6c; }
    .srec { display: flex; align-items: center; justify-content: space-between; height: 10px; padding: 0 1px; overflow: hidden; white-space: nowrap; font-size: 5px; }
    .srec .ico { width: 6px; }
    .srec span { overflow: hidden; }
    .sfx { display: flex; gap: 1px; height: 11px; }
    .sfx .b { width: 10px; }
    .sfx .fx { flex: 1; min-width: 0; }
    .wide .sfx .fx i { margin-left: 6px; }
    .chain { height: 37px; overflow: hidden; background: #454545; border: 1px solid #3a3a3a; }
    .chain button { display: block; width: 100%; height: 8px; margin-bottom: 2px; overflow: hidden; background: #3f7fd0; color: #9cc4f4; font-size: 5px; line-height: 8px; }
    .chain .band { background: #7a1230; color: #e8a0b4; }
    .chain .bypass { background: #a8995a; color: #c8bc84; }
    .params { height: 49px; margin-top: 3px; padding-top: 1px; background: #393939; border: 1px solid #424242; }
    .params div { display: flex; align-items: center; gap: 1px; height: 11px; padding-left: 1px; overflow: hidden; white-space: nowrap; font-size: 5px; color: #c8c8c8; }
    .params .knob { width: 7px; height: 7px; }
    .params .dim { color: #777; }
    .sel .chain, .sel .params { background: #5c5c5c; }
    .send { display: flex; align-items: center; gap: 1px; height: 8px; margin-top: 3px; }
    .send span { flex: 1; min-width: 0; height: 8px; overflow: hidden; border: 1px solid #3c3c3c; border-radius: 1px; font-size: 5px; line-height: 6px; white-space: nowrap; }
    .send .used { background: #3f7fd0; color: #a4ccf8; }
    .send i { width: 7px; height: 7px; flex: none; border: 1px solid #3f3f3f; border-radius: 50%; }
    .send i.used { background: #1f8088; border-color: #262626; }
    .sio { margin: 14px 0 0; width: 100%; overflow: hidden; border-color: #444; }
    .cut .sio { width: 35px; margin-left: -11px; }
    .pan { display: flex; justify-content: space-evenly; height: 35px; padding-top: 8px; text-align: center; }
    .pan div { display: flex; flex-direction: column; align-items: center; min-width: 0; }
    .pan .knob { width: 17px; height: 17px; }
    .pan small { font-size: 4px; color: #999; }
    .stack { flex-direction: column; align-items: flex-start; padding-top: 1px; }
    .stack div { flex-direction: row; align-items: flex-end; }
    .stack .knob { width: 14px; height: 14px; }
    .pair { display: flex; gap: 1px; height: 9px; }
    .pair .b { flex: 1; }
    .pair .ico { width: 6px; height: 6px; opacity: .8; }
    .fader { display: flex; justify-content: space-between; height: 88px; padding: 4px 2px 3px 1px; }
    .vs { appearance: none; writing-mode: vertical-lr; direction: rtl; width: 9px; height: 80px; flex: none; margin: 0; background: linear-gradient(#1c1c1c, #1c1c1c) center / 2px 72px no-repeat; }
    .vs::-webkit-slider-thumb { appearance: none; width: 9px; height: 16px; border-radius: 1px; background: linear-gradient(#dcdcdc 10%, #444 14%, #5c5c5c 40%, #d4d4d4 48%, #8a8a8a 92%, #333); }
    .scale { width: 8px; height: 80px; flex: none; }
    .scale text { font-size: 4px; text-anchor: middle; fill: #8a8a8a; }
    .vu { display: flex; align-items: flex-end; gap: 1px; width: 5px; flex: none; background: #222; }
    .vu i { width: 2px; }
    .vu.green i { height: 62px; background: linear-gradient(#a8b020, #3fa03a 30%); }
    .vu.gold i { height: 62px; background: #b89c50; }
    .vu.low i { height: 45px; background: #3fa03a; }
    .vals { display: flex; align-items: center; height: 10px; }
    .vals span { flex: 1; min-width: 0; font-size: 4px; color: #999; }
    .vals .b { width: 7px; }
    .wide .vals .b { width: 8px; }
    .ms { margin-top: 2px; margin-bottom: 2px; }
    .label { position: relative; height: 16px; margin: 0 -1px; overflow: hidden; text-align: center; white-space: nowrap; font: bold 6px/8px "Liberation Sans", Arial, sans-serif; color: #fff; }
    .cut .label { width: 37px; margin-left: -12px; }
    .label sub { position: absolute; left: 2px; bottom: 0; font-size: 5px; line-height: 6px; }
    .label .right { left: auto; right: 1px; }
    .slate { background: #7c8aa6; }
    .green.label { background: #6fa878; }
    .cyan { background: #2cc4c4; }
    .olive { background: #aaa034; }
    .red { background: #cf2430; }
    .bscroll { height: 8px; padding: 1px 10px 1px 71px; background: #2c2c2c; }
    .bscroll span { display: block; height: 6px; border-radius: 3px; background: #5c5c5c; }
    .mstrip { width: 44px; flex: none; padding: 10px 1px 0 2px; border-left: 1px solid #333; }
    .mfx { display: flex; justify-content: center; height: 11px; }
    .mstrip .fx { width: 23px; }
    .mstrip .params { height: 54px; margin-top: 4px; }
    .mstrip .sio { margin: 5px 4px 0; width: 34px; }
    .mstrip .pair { padding: 0 2px; gap: 4px; }
    .mstrip .fader { padding-left: 0; padding-right: 0; }
    .big { width: 22px; height: 80px; flex: none; }
    .big text { font-size: 4px; fill: #ddd; }
    .mstrip .vals .b { width: 14px; }
    .mstrip > footer { margin-top: 3px; padding-top: 3px; border-top: 1px solid #3a3a3a; text-align: center; font-size: 7px; color: #aaa; }
</style>
